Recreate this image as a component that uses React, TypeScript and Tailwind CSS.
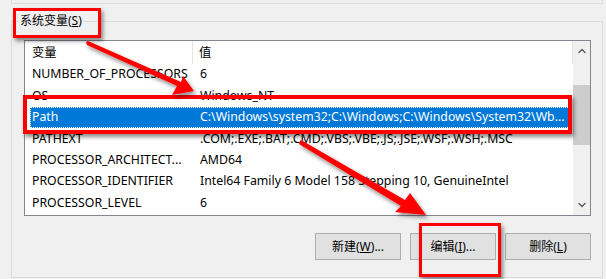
import { ChevronUp, ChevronDown } from "lucide-react";

type Row = { name: string; value: string; selected?: boolean };

const ROWS: Row[] = [
  { name: "NUMBER_OF_PROCESSORS", value: "6" },
  { name: "OS", value: "Windows_NT" },
  { name: "Path", value: "C:\\Windows\\system32;C:\\Windows;C:\\Windows\\System32\\Wb...", selected: true },
  { name: "PATHEXT", value: ".COM;.EXE;.BAT;.CMD;.VBS;.VBE;.JS;.JSE;.WSF;.WSH;.MSC" },
  { name: "PROCESSOR_ARCHITECT...", value: "AMD64" },
  { name: "PROCESSOR_IDENTIFIER", value: "Intel64 Family 6 Model 158 Stepping 10, GenuineIntel" },
  { name: "PROCESSOR_LEVEL", value: "6" },
];

function WinButton({ label, hot, tail }: { label: string; hot: string; tail: string }) {
  return (
    <button className="flex h-[27px] w-[86px] items-center justify-center border border-[#adadad] bg-[#e1e1e1] text-[12px] text-black">
      {label}(<span className="underline">{hot}</span>){tail}
    </button>
  );
}

function Arrows() {
  return (
    <svg className="pointer-events-none absolute inset-0" width="606" height="279" viewBox="0 0 606 279">
      <defs>
        <filter id="sh" x="-20%" y="-20%" width="140%" height="140%">
          <feDropShadow dx="2" dy="3" stdDeviation="2" floodColor="#000" floodOpacity="0.45" />
        </filter>
      </defs>
      <g fill="#ff0000" filter="url(#sh)">
        {/* arrow 1: label -> Path row */}
        <polygon points="86,42 87,45 177,86 172,95 194,91 183,76 181,82 88,41" />
        {/* arrow 2: Path value -> edit button */}
        <polygon points="300,141 299,144 401,206 395,212 426,215 410,193 405,200 301,140" />
      </g>
    </svg>
  );
}

export default function App() {
  return (
    <div className="relative h-[279px] w-[606px] overflow-hidden bg-[#f0f0f0] font-['Noto_Sans','Noto_Sans_CJK_SC',sans-serif] text-black">
      {/* bottom edge of the user-variables group above */}
      <div className="ml-[11px] h-[4px] w-[592px] border-x border-b border-[#dcdcdc]" />

      <div className="relative ml-[11px] mt-[17px] h-[257px] w-[592px] border border-[#dcdcdc]">
        <span className="absolute left-[7px] top-[-10px] bg-[#f0f0f0] px-[1px] text-[12px] leading-[18px]">
          系统变量(<span className="underline">S</span>)
        </span>

        <div className="pl-[12px] pt-[18px]">
          <div className="flex h-[176px] w-[567px] border border-[#828790] bg-white">
            <div className="w-[548px] text-[12.3px]">
              <div className="flex h-[23px] items-center">
                <div className="h-full w-[168px] border-r border-[#e5e5e5] pl-[7px] leading-[23px]">变量</div>
                <div className="h-full flex-1 border-r border-[#e5e5e5] pl-[6px] leading-[23px]">值</div>
              </div>
              {ROWS.map((r) => (
                <div
                  key={r.name}
                  className={
                    r.selected
                      ? "ml-[5px] mr-[3px] flex h-[21.4px] items-center whitespace-nowrap bg-[#0078d7] text-white outline-1 -outline-offset-1 outline-dotted outline-white"
                      : "ml-[5px] mr-[3px] flex h-[21.4px] items-center whitespace-nowrap"
                  }
                >
                  <div className="w-[163px] overflow-hidden pl-[2px]">{r.name}</div>
                  <div className="flex-1 overflow-hidden pl-[7px]">{r.value}</div>
                </div>
              ))}
            </div>
            <div className="flex w-[17px] flex-col bg-[#f0f0f0]">
              <div className="flex h-[20px] items-center justify-center text-[#606060]">
                <ChevronUp size={12} strokeWidth={3} />
              </div>
              <div className="mt-[24px] h-[60px] bg-[#cdcdcd]" />
              <div className="flex-1" />
              <div className="flex h-[20px] items-center justify-center text-[#606060]">
                <ChevronDown size={12} strokeWidth={3} />
              </div>
            </div>
          </div>
        </div>

        <div className="mt-[17px] flex justify-end gap-[9px] pr-[11px]">
          <WinButton label="新建" hot="W" tail="..." />
          <WinButton label="编辑" hot="I" tail="..." />
          <WinButton label="删除" hot="L" tail="" />
        </div>
      </div>

      {/* annotation overlays */}
      <div className="absolute left-[13px] top-[8px] h-[30px] w-[88px] border-[3px] border-[#ff0000] shadow-[2px_3px_4px_rgba(0,0,0,0.45)]" />
      <div className="absolute left-[23px] top-[95px] h-[39px] w-[549px] border-[4px] border-[#ff0000] shadow-[2px_3px_4px_rgba(0,0,0,0.45)]" />
      <div className="absolute left-[419px] top-[223px] h-[54px] w-[82px] border-[3px] border-[#ff0000] shadow-[2px_3px_4px_rgba(0,0,0,0.45)]" />
      <Arrows />
    </div>
  );
}
